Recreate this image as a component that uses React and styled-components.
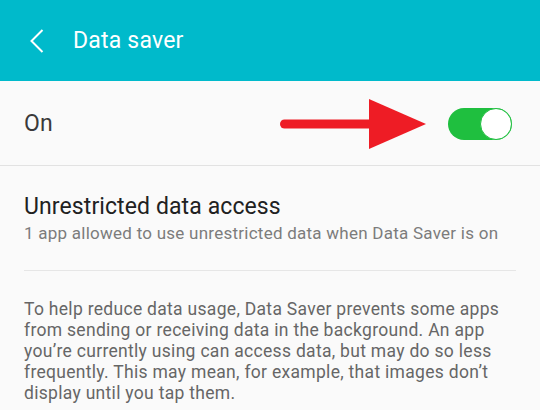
import styled, { createGlobalStyle } from 'styled-components';

const GlobalStyle = createGlobalStyle`
    body {
        margin: 0;
        background: #fafafa;
        font-family: Roboto, "Noto Sans", sans-serif;
    }
`;

const Screen = styled.div`
    width: 540px;
    height: 410px;
    overflow: hidden;
    background: #fafafa;
`;

const AppBar = styled.header`
    height: 81px;
    background-color: #00bacb;
    display: flex;
    align-items: center;
    padding-left: 30px;
    color: #fff;
`;

const BackButton = styled.button`
    border: 0;
    background: none;
    padding: 0;
    width: 16px;
    height: 26px;
    display: flex;
    align-items: center;
    cursor: pointer;
`;

const Title = styled.h1`
    margin: 0 0 0 27px;
    font-size: 23px;
    font-weight: 400;
    letter-spacing: 0.2px;
`;

const SwitchRow = styled.div`
    height: 84px;
    display: flex;
    align-items: center;
    justify-content: space-between;
    padding: 0 28px 0 24px;
    border-bottom: 1px solid #e2e2e2;
`;

const RowLabel = styled.span`
    font-size: 23px;
    letter-spacing: 0.3px;
    color: #3a3a3a;
`;

const Controls = styled.div`
    display: flex;
    align-items: center;
    gap: 22px;
    margin-top: 2px;
`;

const Toggle = styled.div`
    width: 64px;
    height: 32px;
    border-radius: 16px;
    box-sizing: border-box;
    background: ${p => (p.$on ? '#1fbf3f' : '#bdbdbd')};
    display: flex;
    justify-content: ${p => (p.$on ? 'flex-end' : 'flex-start')};
`;

const Knob = styled.span`
    width: 32px;
    height: 32px;
    box-sizing: border-box;
    border-radius: 50%;
    background: #fff;
    border: 1.5px solid #1fbf3f;
`;

const Item = styled.div`
    margin: 0 24px;
    padding: 27px 0 27px;
    border-bottom: 1px solid #e6e6e6;
`;

const ItemTitle = styled.div`
    font-size: 23px;
    letter-spacing: 0.1px;
    color: #212121;
    line-height: 28px;
`;

const ItemSub = styled.div`
    font-size: 17px;
    letter-spacing: 0.25px;
    color: #7c7c7c;
    line-height: 20px;
    margin-top: 2px;
`;

const Note = styled.p`
    margin: 0;
    padding: 28px 24px 0;
    font-size: 17.5px;
    letter-spacing: 0.3px;
    line-height: 21px;
    color: #666;
`;

function Arrow() {
    return (
        <svg width="146" height="50" viewBox="0 0 146 50">
            <line x1="4.5" y1="25" x2="96" y2="25" stroke="#ee1c25" strokeWidth="9" strokeLinecap="round" />
            <polygon points="89,0 146,25 89,50" fill="#ee1c25" />
        </svg>
    );
}

export default function App() {
    return (
        <Screen>
            <GlobalStyle />
            <AppBar>
                <BackButton aria-label="Back">
                    <svg width="14" height="24" viewBox="0 0 14 24">
                        <polyline points="12.5,1 1.5,12 12.5,23" fill="none" stroke="#fff" strokeWidth="2" />
                    </svg>
                </BackButton>
                <Title>Data saver</Title>
            </AppBar>
            <SwitchRow>
                <RowLabel>On</RowLabel>
                <Controls>
                    <Arrow />
                    <Toggle $on>
                        <Knob />
                    </Toggle>
                </Controls>
            </SwitchRow>
            <Item>
                <ItemTitle>Unrestricted data access</ItemTitle>
                <ItemSub>1 app allowed to use unrestricted data when Data Saver is on</ItemSub>
            </Item>
            <Note>
                To help reduce data usage, Data Saver prevents some apps from sending or receiving
                data in the background. An app you’re currently using can access data, but may do
                so less frequently. This may mean, for example, that images don’t display until
                you tap them.
            </Note>
        </Screen>
    );
}
